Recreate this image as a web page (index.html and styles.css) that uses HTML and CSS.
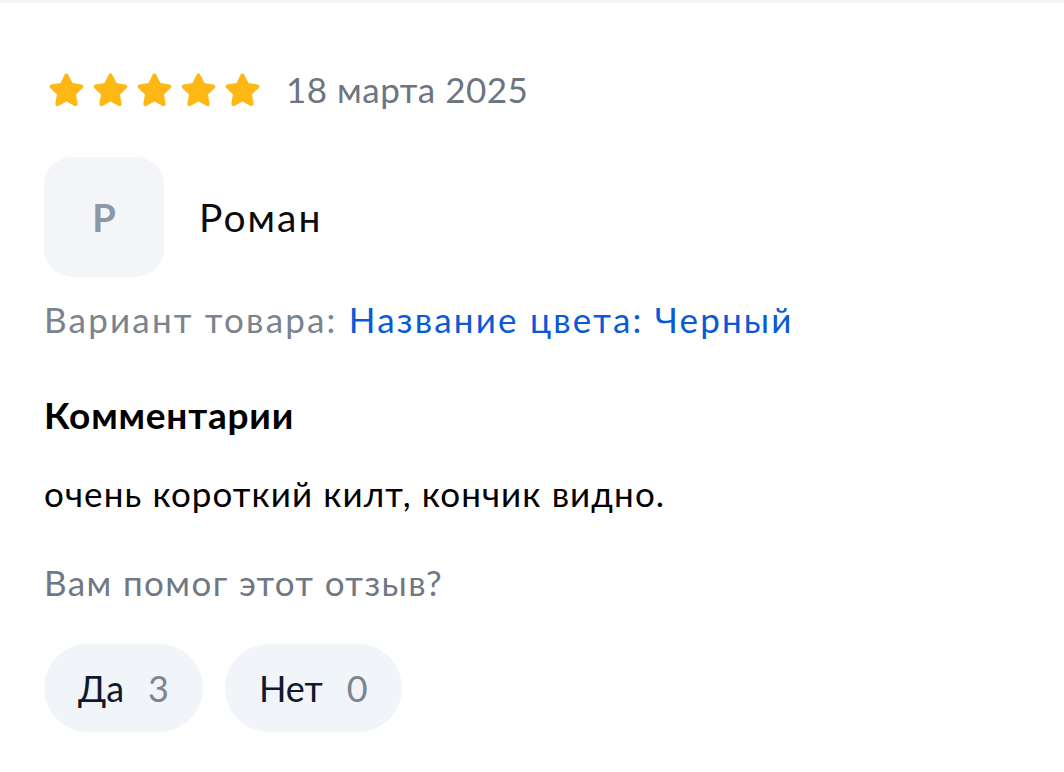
FILE: index.html
```html
<!DOCTYPE html>
<html lang="ru">
<head>
<meta charset="utf-8">
<link rel="stylesheet" href="styles.css">
</head>
<body>
<div class="topline"></div>
<main class="review">
  <div class="rating-row">
    <div class="stars">
      <svg class="star" viewBox="0 0 24 24"><path d="M12 2.6c.5 0 .9.3 1.1.7l2.4 4.9 5.3.8c1 .1 1.4 1.4.7 2.1l-3.9 3.8.9 5.4c.2 1-.9 1.7-1.7 1.3L12 19l-4.8 2.6c-.9.5-1.9-.3-1.7-1.3l.9-5.4-3.9-3.8c-.7-.7-.3-2 .7-2.1l5.3-.8 2.4-4.9c.2-.4.6-.7 1.1-.7z"/></svg>
      <svg class="star" viewBox="0 0 24 24"><path d="M12 2.6c.5 0 .9.3 1.1.7l2.4 4.9 5.3.8c1 .1 1.4 1.4.7 2.1l-3.9 3.8.9 5.4c.2 1-.9 1.7-1.7 1.3L12 19l-4.8 2.6c-.9.5-1.9-.3-1.7-1.3l.9-5.4-3.9-3.8c-.7-.7-.3-2 .7-2.1l5.3-.8 2.4-4.9c.2-.4.6-.7 1.1-.7z"/></svg>
      <svg class="star" viewBox="0 0 24 24"><path d="M12 2.6c.5 0 .9.3 1.1.7l2.4 4.9 5.3.8c1 .1 1.4 1.4.7 2.1l-3.9 3.8.9 5.4c.2 1-.9 1.7-1.7 1.3L12 19l-4.8 2.6c-.9.5-1.9-.3-1.7-1.3l.9-5.4-3.9-3.8c-.7-.7-.3-2 .7-2.1l5.3-.8 2.4-4.9c.2-.4.6-.7 1.1-.7z"/></svg>
      <svg class="star" viewBox="0 0 24 24"><path d="M12 2.6c.5 0 .9.3 1.1.7l2.4 4.9 5.3.8c1 .1 1.4 1.4.7 2.1l-3.9 3.8.9 5.4c.2 1-.9 1.7-1.7 1.3L12 19l-4.8 2.6c-.9.5-1.9-.3-1.7-1.3l.9-5.4-3.9-3.8c-.7-.7-.3-2 .7-2.1l5.3-.8 2.4-4.9c.2-.4.6-.7 1.1-.7z"/></svg>
      <svg class="star" viewBox="0 0 24 24"><path d="M12 2.6c.5 0 .9.3 1.1.7l2.4 4.9 5.3.8c1 .1 1.4 1.4.7 2.1l-3.9 3.8.9 5.4c.2 1-.9 1.7-1.7 1.3L12 19l-4.8 2.6c-.9.5-1.9-.3-1.7-1.3l.9-5.4-3.9-3.8c-.7-.7-.3-2 .7-2.1l5.3-.8 2.4-4.9c.2-.4.6-.7 1.1-.7z"/></svg>
    </div>
    <span class="date">18 марта 2025</span>
  </div>

  <div class="author">
    <div class="avatar">Р</div>
    <span class="name">Роман</span>
  </div>

  <p class="variant">Вариант товара: <a class="variant-link">Название цвета: Черный</a></p>

  <h2 class="section-title">Комментарии</h2>
  <p class="comment">очень короткий килт, кончик видно.</p>

  <p class="helpful">Вам помог этот отзыв?</p>
  <div class="votes">
    <button class="vote"><span class="vote-label">Да</span><span class="vote-count">3</span></button>
    <button class="vote"><span class="vote-label">Нет</span><span class="vote-count">0</span></button>
  </div>
</main>
</body>
</html>
```

FILE: styles.css
```css
* { box-sizing: border-box; }
html, body { margin: 0; padding: 0; background: #ffffff; }
body { font-family: Lato, "Noto Sans", sans-serif; color: #000; }

.topline { height: 3px; background: #f3f4f5; }

.review { padding: 0 44px; }

.rating-row {
  display: flex;
  align-items: center;
  height: 44px;
  margin-top: 64px;
}
.stars { display: flex; gap: 3px; margin-left: 2px; }
.star { width: 41px; height: 41px; fill: #fdb813; }
.date {
  margin-left: 23px;
  font-size: 35px;
  color: #6c7580;
  letter-spacing: 0.5px;
}

.author {
  display: flex;
  align-items: center;
  margin-top: 46px;
}
.avatar {
  width: 120px;
  height: 120px;
  border-radius: 28px;
  background: #f3f5f9;
  display: flex;
  align-items: center;
  justify-content: center;
  font-size: 38px;
  font-weight: 700;
  color: #8d98a7;
}
.name {
  margin-left: 35px;
  font-size: 39px;
  letter-spacing: 2px;
  color: #0b0b0b;
}

.variant {
  margin: 17px 0 0;
  font-size: 35px;
  line-height: 50px;
  letter-spacing: 2.2px;
  color: #7a838e;
}
.variant-link { color: #0a59d6; }

.section-title {
  margin: 46px 0 0;
  font-size: 37px;
  line-height: 50px;
  font-weight: 700;
  letter-spacing: 0.8px;
  color: #000;
}
.comment {
  margin: 28px 0 0;
  font-size: 35px;
  line-height: 50px;
  letter-spacing: 1.1px;
  color: #000;
}
.helpful {
  margin: 39px 0 0;
  font-size: 35px;
  line-height: 50px;
  letter-spacing: 1.4px;
  color: #6f7884;
}

.votes { display: flex; gap: 22px; margin-top: 37px; }
.vote {
  height: 88px;
  padding: 0 34px;
  border: 0;
  border-radius: 44px;
  background: #f1f4f9;
  display: flex;
  align-items: center;
  gap: 24px;
  font-family: inherit;
  font-size: 36px;
}
.vote-label { color: #0e1a2b; }
.vote-count { color: #7d858f; }
```
